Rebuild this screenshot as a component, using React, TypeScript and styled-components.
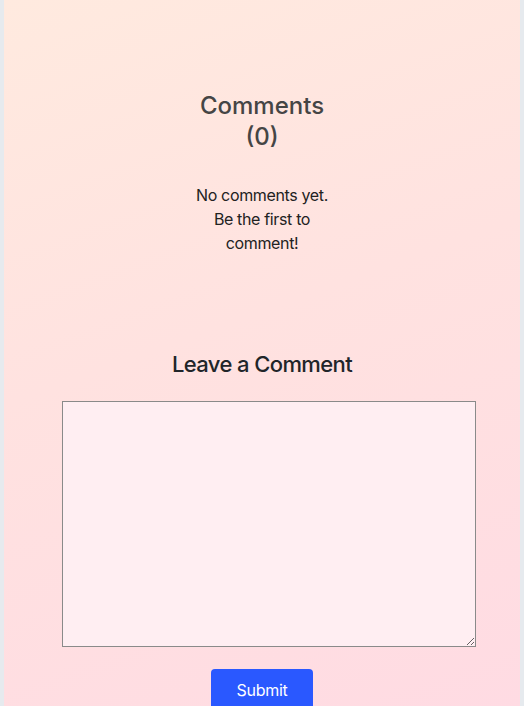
import React from "react";
import styled, { createGlobalStyle } from "styled-components";

const Global = createGlobalStyle`
  html, body { margin: 0; padding: 0; }
  body {
    background: #e6eaee;
    font-family: Inter, "Noto Sans", "Liberation Sans", sans-serif;
  }
`;

const Panel = styled.main`
  margin: 0 4px;
  min-height: 706px;
  background: linear-gradient(160deg, #ffeadf 0%, #ffe2e0 45%, #ffdbe3 100%);
  display: flex;
  flex-direction: column;
  align-items: center;
  padding-top: 90px;
  box-sizing: border-box;
`;

const CommentsSection = styled.section`
  width: 150px;
  text-align: center;
`;

const Title = styled.h2`
  margin: 0;
  font-size: 24px;
  line-height: 31px;
  font-weight: 500;
  color: #454545;
`;

const Empty = styled.p`
  margin: 31px 0 0;
  font-size: 16px;
  line-height: 24px;
  letter-spacing: -0.35px;
  color: #222;
`;

const Form = styled.form`
  width: 400px;
  margin-top: 96px;
  display: flex;
  flex-direction: column;
  align-items: center;
`;

const FormTitle = styled.h3`
  margin: 0;
  font-size: 22px;
  line-height: 26px;
  font-weight: 500;
  letter-spacing: -0.6px;
  color: #212529;
`;

const TextArea = styled.textarea`
  align-self: flex-start;
  margin-top: 24px;
  width: 100%;
  height: 232px;
  padding: 6px;
  border: 1px solid #8a8a8a;
  background: #ffeef2;
  font-family: inherit;
  font-size: 16px;
  box-sizing: content-box;
  outline: none;
`;

const Button = styled.button`
  margin-top: 22px;
  width: 102px;
  height: 42px;
  border: none;
  border-radius: 4px;
  background: #2a58ff;
  color: #fff;
  font-family: inherit;
  font-size: 16px;
  letter-spacing: -0.3px;
  cursor: pointer;
`;

export default function App() {
  return (
    <>
      <Global />
      <Panel>
        <CommentsSection>
          <Title>Comments (0)</Title>
          <Empty>No comments yet. Be the first to comment!</Empty>
        </CommentsSection>
        <Form onSubmit={(e) => e.preventDefault()}>
          <FormTitle>Leave a Comment</FormTitle>
          <TextArea />
          <Button type="submit">Submit</Button>
        </Form>
      </Panel>
    </>
  );
}
